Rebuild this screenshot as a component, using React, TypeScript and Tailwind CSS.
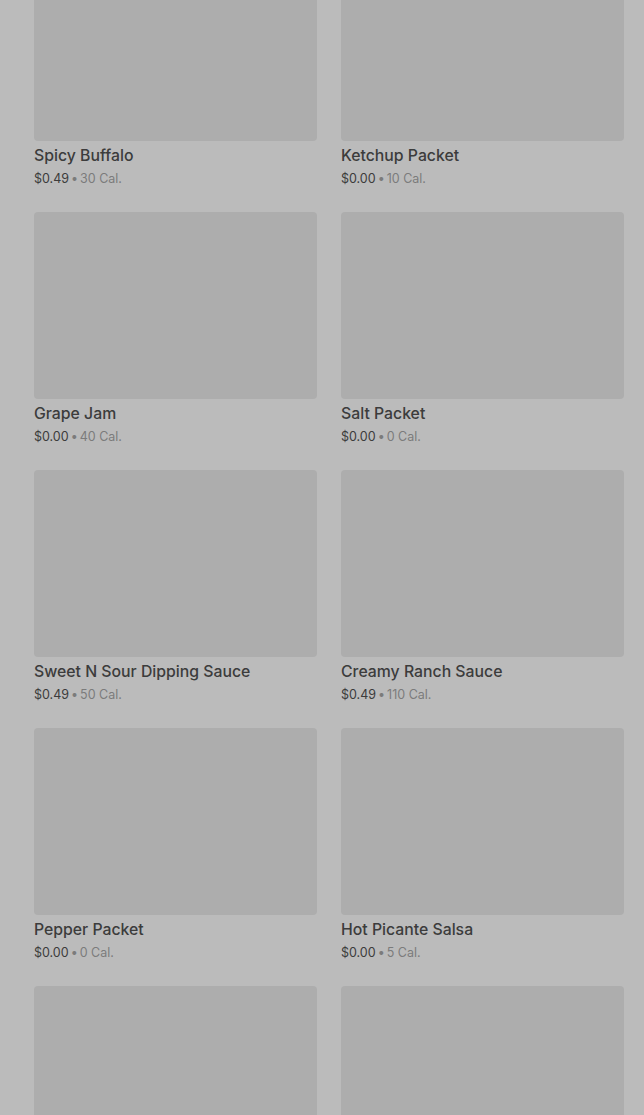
const items = [
  { name: "Spicy Buffalo", price: "$0.49", cal: "30 Cal." },
  { name: "Ketchup Packet", price: "$0.00", cal: "10 Cal." },
  { name: "Grape Jam", price: "$0.00", cal: "40 Cal." },
  { name: "Salt Packet", price: "$0.00", cal: "0 Cal." },
  { name: "Sweet N Sour Dipping Sauce", price: "$0.49", cal: "50 Cal." },
  { name: "Creamy Ranch Sauce", price: "$0.49", cal: "110 Cal." },
  { name: "Pepper Packet", price: "$0.00", cal: "0 Cal." },
  { name: "Hot Picante Salsa", price: "$0.00", cal: "5 Cal." },
  { name: "", price: "", cal: "" },
  { name: "", price: "", cal: "" },
];

export default function App() {
  return (
    <div
      className="h-[1115px] w-[644px] overflow-hidden bg-[#bbbbbb]"
      style={{ fontFamily: "Inter, 'Noto Sans', sans-serif" }}
    >
      <div className="mt-[-46px] grid grid-cols-[283px_283px] gap-x-6 gap-y-[25px] pl-[34px]">
        {items.map((it, i) => (
          <div key={i}>
            <div className="h-[187px] rounded-sm bg-[#adadad]" />
            {it.name && (
              <>
                <div className="mt-[5px] text-[15.8px] font-medium leading-5 text-[#3c3c3c]">
                  {it.name}
                </div>
                <div className="mt-[5px] text-[12.5px] leading-4 text-[#7b7b7b]">
                  <span className="text-[#3c3c3c]">{it.price}</span>
                  <span className="mx-[2px]">•</span>
                  {it.cal}
                </div>
              </>
            )}
          </div>
        ))}
      </div>
    </div>
  );
}
